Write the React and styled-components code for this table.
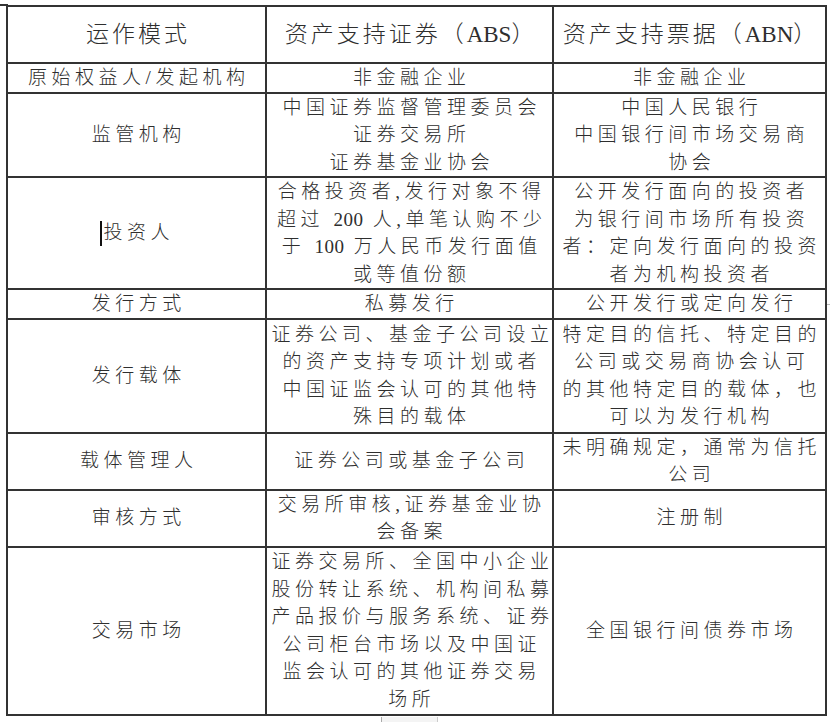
import React from 'react';
import styled, { createGlobalStyle } from 'styled-components';

const rows = [
  { label: '原始权益人/发起机构', abs: ['非金融企业'], abn: ['非金融企业'], h: 29 },
  {
    label: '监管机构',
    abs: ['中国证券监督管理委员会', '证券交易所', '证券基金业协会'],
    abn: ['中国人民银行', '中国银行间市场交易商', '协会'],
    h: 84,
  },
  {
    label: '投资人',
    caret: true,
    abs: ['合格投资者,发行对象不得', '超过 200 人,单笔认购不少', '于 100 万人民币发行面值', '或等值份额'],
    abn: ['公开发行面向的投资者', '为银行间市场所有投资', '者：定向发行面向的投资', '者为机构投资者'],
    h: 112,
  },
  { label: '发行方式', abs: ['私募发行'], abn: ['公开发行或定向发行'], h: 29, tick: true },
  {
    label: '发行载体',
    abs: ['证券公司、基金子公司设立', '的资产支持专项计划或者', '中国证监会认可的其他特', '殊目的载体'],
    abn: ['特定目的信托、特定目的', '公司或交易商协会认可', '的其他特定目的载体，也', '可以为发行机构'],
    h: 114,
  },
  { label: '载体管理人', abs: ['证券公司或基金子公司'], abn: ['未明确规定，通常为信托', '公司'], h: 57 },
  { label: '审核方式', abs: ['交易所审核,证券基金业协', '会备案'], abn: ['注册制'], h: 56 },
  {
    label: '交易市场',
    abs: [
      '证券交易所、全国中小企业',
      '股份转让系统、机构间私募',
      '产品报价与服务系统、证券',
      '公司柜台市场以及中国证',
      '监会认可的其他证券交易',
      '场所',
    ],
    abn: ['全国银行间债券市场'],
    h: 168,
  },
];

// digits sit tight, CJK is spaced out
const renderText = (text) =>
  text.split(/(\d+)/).map((part, i) => (/^\d+$/.test(part) ? <Digits key={i}>{part}</Digits> : part));

const GlobalStyle = createGlobalStyle`
  body {
    margin: 0;
    background: #fff;
    font-family: "Liberation Serif", "Noto Sans CJK SC", serif;
  }
`;

const App = () => {
  return (
    <>
      <GlobalStyle />
      <Page>
        <Table>
          <colgroup>
            <Col $w={259} />
            <Col $w={287} />
            <Col $w={273} />
          </colgroup>
          <tbody>
            <Row $h={57}>
              <HeadCell>运作模式</HeadCell>
              <HeadCell>
                资产支持证券（<Latin>ABS</Latin>）
              </HeadCell>
              <HeadCell>
                资产支持票据（<Latin>ABN</Latin>）
              </HeadCell>
            </Row>
            {rows.map((r) => (
              <Row key={r.label} $h={r.h}>
                <Cell>
                  <Label>
                    {r.caret && <Caret />}
                    {r.label}
                  </Label>
                </Cell>
                <Cell>
                  {r.abs.map((l) => (
                    <Line key={l}>{renderText(l)}</Line>
                  ))}
                </Cell>
                <Cell $tick={r.tick}>
                  {r.abn.map((l) => (
                    <Line key={l}>{renderText(l)}</Line>
                  ))}
                </Cell>
              </Row>
            ))}
          </tbody>
        </Table>
        <Scroll />
      </Page>
    </>
  );
};

const Page = styled.div`
  position: relative;
  padding-top: 5px;
  width: 830px;
  height: 722px;
  overflow: hidden;

  /* top rule runs out to the left edge */
  &::before {
    content: '';
    position: absolute;
    left: 0;
    top: 4px;
    width: 8px;
    height: 2px;
    background: #333;
  }
`;

const Table = styled.table`
  border-collapse: collapse;
  table-layout: fixed;
  width: 819px;
  margin-left: 6px;
  color: #2e2e2e;
`;

const Col = styled.col`
  width: ${(p) => p.$w}px;
`;

const Row = styled.tr`
  height: ${(p) => p.$h}px;
`;

const Cell = styled.td`
  position: relative;
  border: 2px solid #333;
  padding: 0 0 0 4.5px;
  text-align: center;
  vertical-align: middle;
  font-size: 19px;
  line-height: 27.5px;
  letter-spacing: 4.5px;
  font-weight: 300;
  white-space: nowrap;

  &::after {
    content: '';
    display: ${(p) => (p.$tick ? 'block' : 'none')};
    position: absolute;
    right: -7px;
    top: 14px;
    width: 5px;
    height: 1px;
    background: #bbb;
  }
`;

const HeadCell = styled(Cell)`
  font-size: 23px;
  letter-spacing: 3px;
  padding-left: 3px;
`;

const Latin = styled.span`
  letter-spacing: 0;
`;

const Digits = styled.span`
  letter-spacing: 0.5px;
`;

const Label = styled.span`
  position: relative;
`;

const Line = styled.div`
  white-space: nowrap;
`;

const Caret = styled.span`
  position: absolute;
  left: -3px;
  top: 50%;
  width: 2px;
  height: 25px;
  margin-top: -12px;
  background: #111;
`;

const Scroll = styled.div`
  margin: 1px 0 0 381px;
  width: 55px;
  height: 6px;
  border-left: 1px solid #aaa;
  border-right: 1px solid #ccc;
  background: #f4f4f4;
`;

export default App;
